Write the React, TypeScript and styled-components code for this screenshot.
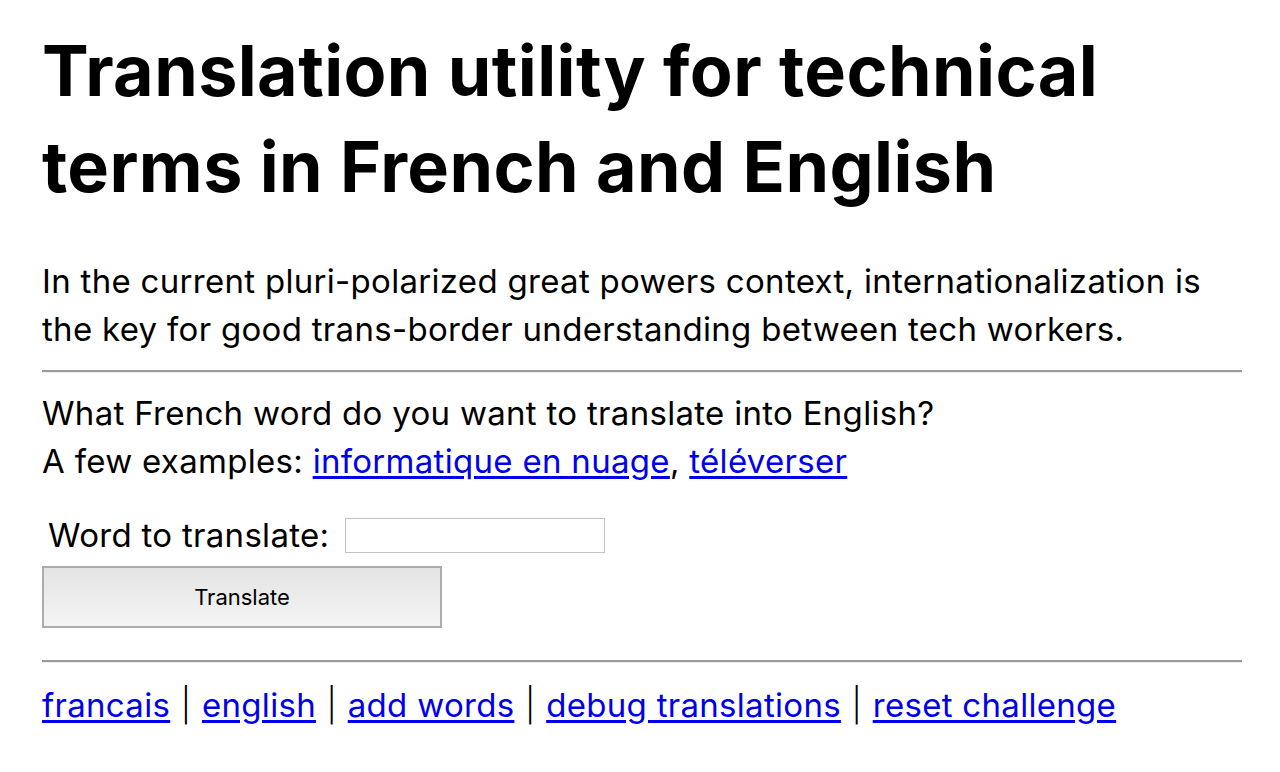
import React from "react";
import styled, { createGlobalStyle } from "styled-components";

const Global = createGlobalStyle`
  html, body { margin: 0; padding: 0; background: #fff; }
  body { font-family: Inter, "Noto Sans", "Noto Sans CJK JP", sans-serif; color: #000; }
`;

const Page = styled.div`
  padding: 23px 0 40px 42px;
  width: 1200px;
`;

const Title = styled.h1`
  margin: 0;
  font-size: 70px;
  line-height: 96px;
  font-weight: 700;
  letter-spacing: 0.4px;
`;

const Text = styled.p<{ $top?: number }>`
  margin: ${(p) => p.$top ?? 0}px 0 0 0;
  font-size: 33px;
  line-height: 48px;
  letter-spacing: 0.3px;
`;

const Rule = styled.hr<{ $top: number }>`
  margin: ${(p) => p.$top}px 0 0 0;
  height: 0;
  border: 0;
  border-top: 2px solid #9a9a9a;
  border-bottom: 1px solid #eeeeee;
`;

const Link = styled.a`
  color: #0000ee;
  text-decoration: underline;
  text-underline-offset: 3px;
`;

const FormRow = styled.div`
  margin-top: 26px;
  height: 48px;
  display: flex;
  align-items: center;
  padding-left: 6px;
  gap: 16px;
  font-size: 33px;
  letter-spacing: 0.3px;
`;

const Field = styled.input`
  box-sizing: border-box;
  width: 260px;
  height: 35px;
  border: 1px solid #c2c2c2;
  background: #fff;
  font-size: 20px;
  padding: 0 6px;
  outline: none;
`;

const Button = styled.button`
  box-sizing: border-box;
  display: block;
  margin-top: 7px;
  width: 400px;
  height: 62px;
  border: 2px solid #acacac;
  background: linear-gradient(#e4e4e4, #f4f4f4);
  font-family: inherit;
  font-size: 22px;
  color: #000;
  padding: 0;
`;

const Footer = styled.div`
  margin-top: 18px;
  font-size: 33px;
  line-height: 48px;
  letter-spacing: 0.3px;
`;

const Sep = styled.span`
  margin: 0 1px;
  font-weight: 300;
`;

const footerLinks = ["francais", "english", "add words", "debug translations", "reset challenge"];

export default function App() {
  return (
    <>
      <Global />
      <Page>
        <Title>Translation utility for technical terms in French and English</Title>
        <Text $top={42}>
          In the current pluri-polarized great powers context, internationalization is the key for good
          trans-border understanding between tech workers.
        </Text>
        <Rule $top={17} />
        <Text $top={16}>
          What French word do you want to translate into English?
          <br />
          A few examples: <Link href="#">informatique en nuage</Link>, <Link href="#">téléverser</Link>
        </Text>
        <FormRow>
          <span>Word to translate:</span>
          <Field type="text" />
        </FormRow>
        <Button>Translate</Button>
        <Rule $top={32} />
        <Footer>
          {footerLinks.map((l, i) => (
            <React.Fragment key={l}>
              {i > 0 && <Sep> | </Sep>}
              <Link href="#">{l}</Link>
            </React.Fragment>
          ))}
        </Footer>
      </Page>
    </>
  );
}
